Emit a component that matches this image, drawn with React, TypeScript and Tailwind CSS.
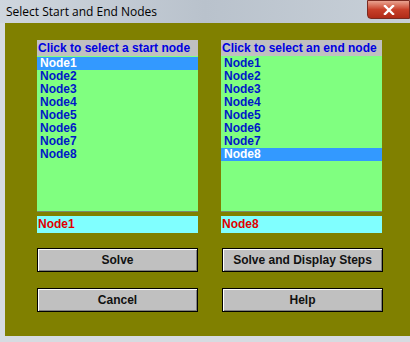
import React from 'react';

const NODES = ['Node1', 'Node2', 'Node3', 'Node4', 'Node5', 'Node6', 'Node7', 'Node8'];

const font = { fontFamily: '"Liberation Sans", Arial, sans-serif' };

interface NodeListProps {
  title: string;
  selected: string;
}

const NodeList: React.FC<NodeListProps> = ({ title, selected }) => (
  <div className="flex flex-col w-[161px]">
    <div className="h-[16px] bg-[#c0c0c0] text-[#0000e0] font-bold text-[12px] leading-[16px] pl-[1px] whitespace-nowrap">
      {title}
    </div>
    <div className="h-[156px] bg-[#80ff80] border-b border-[#7a8a70] pt-[1px]">
      {NODES.map((n) => (
        <div
          key={n}
          className={`h-[13px] leading-[13px] pl-[3px] font-bold text-[12px] ${
            n === selected ? 'bg-[#3399ff] text-white' : 'text-[#0018c8]'
          }`}
        >
          {n}
        </div>
      ))}
    </div>
    <div className="mt-[4px] h-[17px] bg-[#80ffff] text-[#e00000] font-bold text-[12px] leading-[17px] pl-[1px]">
      {selected}
    </div>
  </div>
);

const Btn: React.FC<{ label: string }> = ({ label }) => (
  <button className="w-[161px] h-[24px] bg-[#c0c0c0] border border-black text-[#111] font-bold text-[12px] shadow-[inset_1px_1px_0_#ffffff,inset_-1px_-1px_0_#808080]">
    {label}
  </button>
);

export default function App() {
  return (
    <div className="w-[410px] h-[342px] bg-[#d6dbe1] flex flex-col overflow-hidden" style={font}>
      <div className="h-[23px] relative bg-gradient-to-r from-[#cfd6de] via-[#b9c2cc] to-[#c8d0d8] flex items-center">
        <span className="pl-[6px] text-[12px] text-black" style={{ fontFamily: '"Open Sans", "Liberation Sans", sans-serif' }}>
          Select Start and End Nodes
        </span>
        <div className="absolute right-0 top-0 w-[43px] h-[19px] rounded-bl-[4px] border border-[#7a2a20] bg-gradient-to-b from-[#e8a290] via-[#c8402a] to-[#b02a18] flex items-center justify-center">
          <svg width="12" height="10" viewBox="0 0 12 10">
            <path d="M2 1 L10 9 M10 1 L2 9" stroke="white" strokeWidth="2.4" strokeLinecap="square" />
          </svg>
        </div>
      </div>
      <div className="flex-1 flex pl-[5px] pb-[6px]">
        <div className="flex-1 bg-[#808000] pl-[32px] pt-[17px] flex flex-col">
          <div className="flex gap-[23px]">
            <NodeList title="Click to select a start node" selected="Node1" />
            <NodeList title="Click to select an end node" selected="Node8" />
          </div>
          <div className="mt-[15px] flex gap-[24px]">
            <Btn label="Solve" />
            <Btn label="Solve and Display Steps" />
          </div>
          <div className="mt-[16px] flex gap-[24px]">
            <Btn label="Cancel" />
            <Btn label="Help" />
          </div>
        </div>
      </div>
    </div>
  );
}
